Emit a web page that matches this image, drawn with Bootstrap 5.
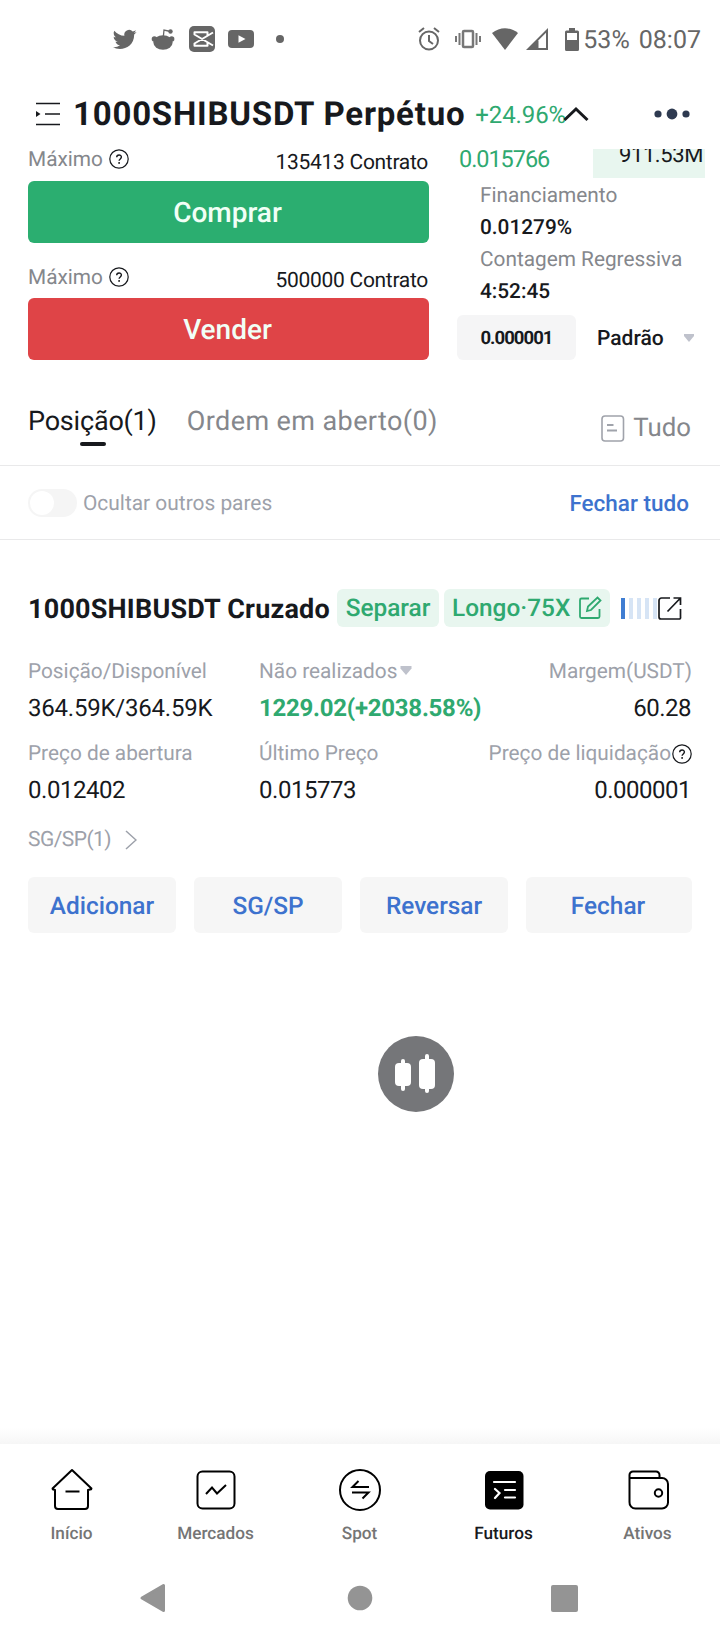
<!DOCTYPE html>
<html lang="pt">
<head>
<meta charset="utf-8">
<meta name="viewport" content="width=device-width, initial-scale=1">
<title>1000SHIBUSDT Perpétuo</title>
<link rel="stylesheet" href="https://cdn.jsdelivr.net/npm/bootstrap@5.3.0/dist/css/bootstrap.min.css">
<style>
*{text-rendering:geometricPrecision}
body{font-family:Roboto,"Liberation Sans",sans-serif;color:#17191d;background:#fff;font-size:21px;line-height:24px}
svg{display:block;flex:none}
.screen{width:720px;height:1640px;overflow:hidden}
.w5{font-weight:500}.w7{font-weight:700}
.up{color:#2fa970}.link{color:#3d72ce}.dim{color:#85878c}.soft{color:#9da1aa}
.line{white-space:nowrap}
.status{height:78px;color:#666;font-size:25px;padding:0 19px 0 112px}
.head{height:71px;padding:0 30px 0 36px}
.head h1{font-size:33px;line-height:40px;letter-spacing:.78px;font-weight:700;margin:0}
.chg{font-size:24px;letter-spacing:-.1px}
.trade{height:211px;padding:0 15px 0 28px}
.buy-col{width:401px}.info-col{width:248px;margin-left:28px}
.max-row{height:25px}
.max-row .dim{font-size:20.8px;margin-top:-4px}
.max-row .num{font-size:21px;letter-spacing:-.3px;margin-right:1px;padding-top:2px}
.big-btn{height:62px;border:0;border-radius:6px;color:#f1fff6;font-size:28px;font-weight:500;padding:2px 2px 0 0;width:100%}
.bg-buy{background:#2bae70}.bg-sell{background:#df4447}
.volume{width:112px;height:29px;background:#e8f6ef;overflow:hidden;font-size:22px;line-height:13px;padding-right:2px;text-align:right;letter-spacing:-.4px}
.stats{padding:2px 0 0 23px;font-size:20.8px;line-height:32px}
.step{width:119px;height:45px;border-radius:6px;background:#f5f5f6;font-size:18.5px;letter-spacing:-.95px}
.tabs-row{height:105px;padding:0 29px 0 28px;font-size:27px}
.tab-on{position:relative;letter-spacing:-.2px;margin-right:30px}
.tab-on::after{content:"";position:absolute;left:52px;bottom:-13px;width:26px;height:4px;border-radius:2px;background:#17191d}
.rule{height:1px;background:#e9e9ea}
.filter{height:73px;padding:0 31px 0 28px}
.toggle{width:49px;height:28px;border-radius:14px;background:#f5f5f5;padding:2px;margin-right:6px}
.toggle i{display:block;width:24px;height:24px;border-radius:50%;background:#fff}
.pos{padding:48px 28px 0}
.pos h2{font-size:27px;line-height:38px;font-weight:700;margin:0;padding-top:2px;width:309px;letter-spacing:.2px}
.tag{height:38px;border-radius:6px;background:#e8f6ef;font-size:24.4px;font-weight:500;color:#2fa970}
.strength{height:21px;gap:4px}
.strength i{width:4px;background:#d6e4f5}.strength i:first-child{background:#3f7dd2}
.facts{display:grid;grid-template-columns:231px 1fr auto;padding-top:26px}
.facts .lab{line-height:36px;color:#9da1aa;font-size:20.8px;height:36px}
.facts .val{line-height:36px;font-size:24px;letter-spacing:-.35px;height:46px}
.act{height:56px;border:0;border-radius:6px;background:#f6f6f6;color:#3d72ce;font-weight:500;font-size:24.4px;padding:1px 0 0}
.fab{width:76px;height:76px;margin-left:378px;margin-top:103px}
.dock-shadow{height:16px;background:linear-gradient(#fff,#f6f6f6)}
.dock{height:116px}
.dock a{width:144px;color:#757575;text-decoration:none;font-size:17.2px;font-weight:500;line-height:20px;padding:24px 1px 0 0}
.dock a.on{color:#17191d}
.dock svg{margin:0 0 12px 0}
.sys{height:80px;padding:0 142px 4px 139px}
</style>
</head>
<body>
<svg width="0" height="0" class="position-absolute"><defs>
<symbol id="q" viewBox="0 0 20 20"><circle cx="10" cy="10" r="9.2" fill="none" stroke="#17191d" stroke-width="1.2"/><path d="M7.700 8.200c0-2.900 4.700-2.900 4.700-.1 0 1.800-2.300 1.900-2.300 3.700" fill="none" stroke="#17191d" stroke-width="1.400"/><circle cx="10.100" cy="13.900" r=".9"/></symbol>
</defs></svg>
<main class="screen d-flex flex-column">
  <header class="status d-flex align-items-center">
    <svg width="25" height="25" viewBox="0 0 24 24" fill="#666"><path d="M23.600 4.900c-.8.4-1.700.6-2.700.8.9-.6 1.700-1.500 2-2.600-.9.5-1.900.9-3 1.100a4.700 4.700 0 0 0-8 4.300C8 8.300 4.500 6.400 2.200 3.600c-1.200 2.100-.6 4.900 1.500 6.300-.8 0-1.500-.2-2.100-.6 0 2.200 1.500 4.200 3.800 4.700-.7.2-1.400.2-2.100.1.6 1.900 2.300 3.200 4.400 3.300A9.600 9.600 0 0 1 .7 19.300c7 4.400 20.600 1.300 20.600-12 .9-.6 1.700-1.500 2.300-2.400z"/></svg>
    <svg style="margin-left:14px" width="25" height="25" viewBox="0 0 25 25" fill="#666"><ellipse cx="12" cy="15.500" rx="9.600" ry="7.300"/><circle cx="3.400" cy="12" r="2.700"/><circle cx="20.700" cy="12" r="2.700"/><circle cx="19.500" cy="4.500" r="2.200"/><path d="M12.300 10 13 3l6.500 1.500" fill="none" stroke="#666" stroke-width="1.300"/></svg>
    <svg style="margin-left:13px" width="26" height="26" viewBox="0 0 26 26"><rect width="26" height="26" rx="5" fill="#666"/><path d="M24 6.500 5.500 17.500v2.300h13v-3M24 19.500 5.500 8.500V6.200h13v3" fill="none" stroke="#fff" stroke-width="2" stroke-linejoin="round"/></svg>
    <svg style="margin-left:13px" width="26" height="20" viewBox="0 0 26 20"><rect y="1" width="26" height="18" rx="4" fill="#666"/><path d="m10.500 6.300 7 3.700-7 3.700z" fill="#fff"/></svg>
    <svg style="margin-left:22px" width="8" height="8" viewBox="0 0 8 8"><circle cx="4" cy="4" r="4" fill="#666"/></svg>
    <svg class="ms-auto" width="22" height="24" viewBox="0 0 22 24" fill="none" stroke="#666" stroke-width="2"><circle cx="11" cy="13.500" r="9"/><path d="M11 8v6l4 3M1 5l5-4M21 5l-5-4"/></svg>
    <svg style="margin-left:15px" width="26" height="20" viewBox="0 0 26 20" fill="none" stroke="#777" stroke-width="2"><rect x="8" y="2" width="10" height="16" rx="1" stroke-width="2.500"/><path d="M1 7v6M4.500 4v12M21.500 4v12M25 7v6"/></svg>
    <svg style="margin-left:11px" width="26" height="22" viewBox="0 0 26 22"><path d="M0 5C8-1.300 18-1.300 26 5L13 22z" fill="#666"/></svg>
    <svg style="margin-left:8px" width="22" height="22" viewBox="0 0 22 22"><path d="M0 22 22 0v22z" fill="#666"/><path d="M12.500 12.300V20H20V4.800z" fill="#fff"/></svg>
    <svg style="margin-left:17px" width="14" height="23" viewBox="0 0 14 23"><path d="M4 0h6v2.500h2.500A1.500 1.500 0 0 1 14 4v17.500a1.500 1.500 0 0 1-1.500 1.500h-11A1.500 1.500 0 0 1 0 21.500V4a1.500 1.500 0 0 1 1.500-1.500H4z" fill="#666"/><path d="M2 5h10v7H2z" fill="#fff"/></svg>
    <span class="line" style="margin:4px 0 0 4px">53%</span><span class="line" style="margin:4px 0 0 9px">08:07</span>
  </header>

  <section class="head d-flex align-items-center">
    <svg width="24" height="24" viewBox="0 0 24 24"><path d="M0 1.500h24M9 12h15M0 22.500h24" stroke="#17191d" stroke-width="1.300"/><path d="M0 9v6l4.500-3z" fill="#17191d"/></svg>
    <h1 class="line" style="margin:3px 0 0 13px">1000SHIBUSDT Perpétuo</h1>
    <span class="chg up line" style="margin:2px 0 0 10px">+24.96%</span>
    <svg style="margin-left:-3px" width="26" height="16" viewBox="0 0 26 16"><path d="M1.500 14 13 3l11.500 11" fill="none" stroke="#17191d" stroke-width="3"/></svg>
    <svg class="ms-auto" width="36" height="12" viewBox="0 0 36 12" fill="#2e3a50"><circle cx="4" cy="6" r="3.600"/><circle cx="18" cy="6" r="5.400"/><circle cx="32" cy="6" r="3.600"/></svg>
  </section>

  <section class="trade d-flex">
    <div class="buy-col">
      <div class="max-row d-flex align-items-center"><span class="dim line">Máximo</span><svg style="margin:-5px 0 0 6px" width="20" height="20"><use href="#q"/></svg><span class="num line ms-auto">135413 Contrato</span></div>
      <button class="big-btn bg-buy d-block" style="margin-top:7px">Comprar</button>
      <div class="max-row d-flex align-items-center" style="margin-top:24px"><span class="dim line">Máximo</span><svg style="margin:-6px 0 0 6px" width="20" height="20"><use href="#q"/></svg><span class="num line ms-auto">500000 Contrato</span></div>
      <button class="big-btn bg-sell d-block" style="margin-top:6px">Vender</button>
    </div>
    <div class="info-col">
      <div class="d-flex justify-content-between"><span class="up line" style="font-size:23.500px;letter-spacing:-1.050px;line-height:21px;padding-left:2px">0.015766</span><div class="volume line">911.53M</div></div>
      <div class="stats line"><div class="dim">Financiamento</div><div class="w5">0.01279%</div><div class="dim">Contagem Regressiva</div><div class="w5">4:52:45</div></div>
      <div class="d-flex align-items-center" style="margin-top:7px"><div class="step w7 d-flex align-items-center justify-content-center">0.000001</div><span class="w5 line" style="margin-left:21px;padding-top:2px">Padrão</span><svg class="ms-auto" style="margin-right:10px" width="12" height="8" viewBox="0 0 12 8"><path d="M1 0h10v2L6 8 1 2z" fill="#bfc2cc"/></svg></div>
    </div>
  </section>

  <nav class="tabs-row d-flex align-items-center">
    <span class="tab-on line" style="margin-top:17px;line-height:24px">Posição(1)</span><span class="dim line" style="letter-spacing:.4px;padding-top:17px">Ordem em aberto(0)</span>
    <svg class="ms-auto" style="margin-top:31px" width="24" height="27" viewBox="0 0 24 27" fill="none" stroke="#a0a3ab"><rect x="1" y="1" width="21.500" height="25" rx="3" stroke-width="1.600"/><path d="M6 10h6.500M6 15.500h10" stroke-width="1.800"/></svg>
    <span class="dim line" style="font-size:25.800px;margin:31px 0 0 8px">Tudo</span>
  </nav>
  <div class="rule"></div>
  <div class="filter d-flex align-items-center"><span class="toggle"><i></i></span><span class="soft line" style="font-size:20.900px;padding-top:2px">Ocultar outros pares</span><span class="link w5 line ms-auto" style="font-size:22.500px;padding-top:2px">Fechar tudo</span></div>
  <div class="rule"></div>

  <section class="pos">
    <div class="d-flex align-items-center">
      <h2 class="line">1000SHIBUSDT Cruzado</h2>
      <span class="tag line d-flex align-items-center justify-content-center" style="width:102px">Separar</span>
      <span class="tag line d-flex align-items-center" style="width:166px;margin-left:5px;padding-left:8px">Longo·75X<svg class="ms-auto" style="margin-right:7px" width="25" height="24" viewBox="0 0 25 24" fill="none" stroke="#2fa970" stroke-width="1.800"><path d="M11 2.500H3.500A1.500 1.500 0 0 0 2 4v16.500A1.500 1.500 0 0 0 3.500 22H20a1.500 1.500 0 0 0 1.500-1.500V13"/><path d="m9 15 1-4.500L19.500 1.500l3 3L13 14z"/></svg></span>
      <span class="strength d-flex" style="margin-left:11px"><i></i><i></i><i></i><i></i><i></i></span>
      <svg width="25" height="25" viewBox="0 0 25 25" fill="none" stroke="#17191d" stroke-width="1.700"><path d="M13 2H4.500A2.500 2.500 0 0 0 2 4.500V21a2 2 0 0 0 2 2h18a1.500 1.500 0 0 0 1.500-2v-8M10.500 15.500 23.500 2M16.500 2h7v7"/></svg>
    </div>
    <div class="facts line">
      <div class="lab">Posição/Disponível</div><div class="lab d-flex align-items-center">Não realizados<svg style="margin:-3px 0 0 3px" width="12" height="9" viewBox="0 0 12 9"><path d="M.500 0h11v2.500L6 9 .500 2.500z" fill="#bfc2cc"/></svg></div><div class="lab text-end">Margem(USDT)</div>
      <div class="val" style="letter-spacing:-.220px">364.59K/364.59K</div><div class="val up w7" style="letter-spacing:-.250px">1229.02(+2038.58%)</div><div class="val text-end" style="padding-right:1px;letter-spacing:-.500px">60.28</div>
      <div class="lab">Preço de abertura</div><div class="lab">Último Preço</div><div class="lab d-flex align-items-center">Preço de liquidação<svg style="margin-left:1px" width="20" height="20"><use href="#q"/></svg></div>
      <div class="val" style="letter-spacing:-.450px">0.012402</div><div class="val" style="letter-spacing:-.450px">0.015773</div><div class="val text-end" style="padding-right:1px;letter-spacing:-.500px">0.000001</div>
    </div>
    <div class="soft d-flex align-items-center" style="height:36px;margin-top:4px;letter-spacing:-.550px"><span>SG/SP(1)</span><svg style="margin-left:14px" width="12" height="20" viewBox="0 0 12 20"><path d="m1 1 10 9L1 19" fill="none" stroke="#9da1aa" stroke-width="1.500"/></svg></div>
    <div class="d-flex" style="margin-top:19px;gap:18px"><button class="act" style="width:148px">Adicionar</button><button class="act" style="width:148px">SG/SP</button><button class="act" style="width:148px">Reversar</button><button class="act flex-grow-1" style="padding-right:2px">Fechar</button></div>
  </section>
  <svg class="fab" viewBox="0 0 76 76"><circle cx="38" cy="38" r="38" fill="#757679"/><g fill="#fff"><rect x="17" y="27" width="16" height="23" rx="4"/><rect x="23" y="23" width="4" height="32" rx="2"/><rect x="41" y="23" width="16" height="30" rx="4"/><rect x="47" y="18" width="4" height="39" rx="2"/></g></svg>

  <div class="dock-shadow mt-auto"></div>
  <nav class="dock d-flex">
    <a class="d-flex flex-column align-items-center"><svg width="44" height="44" viewBox="0 0 44 44" fill="none" stroke="#000" stroke-width="2" stroke-linejoin="round"><path d="M2 21 22 2l20 19M2 21l3 1v16a3 3 0 0 0 3 3h27a3 3 0 0 0 3-3V22l4-1M15.500 23.500h14"/></svg>Início</a>
    <a class="d-flex flex-column align-items-center"><svg width="44" height="44" viewBox="0 0 44 44" fill="none" stroke="#000" stroke-width="2"><rect x="3.500" y="3.500" width="37" height="37" rx="5"/><path d="m12 26 6-6.500 5 6L32 17"/></svg>Mercados</a>
    <a class="d-flex flex-column align-items-center"><svg width="44" height="44" viewBox="0 0 44 44" fill="none" stroke="#000" stroke-width="2"><circle cx="22" cy="22" r="20"/><path d="M31 19H14.500l6-6M14 24.500h16.500l-6 6"/></svg>Spot</a>
    <a class="on d-flex flex-column align-items-center"><svg width="44" height="44" viewBox="0 0 44 44"><rect x="3" y="3" width="38.500" height="38.500" rx="5"/><path d="M12 14h21M23 22h10M23 29.500h10M13 21l4.500 4-4.500 5" fill="none" stroke="#fff" stroke-width="2.200" stroke-linecap="round"/></svg>Futuros</a>
    <a class="d-flex flex-column align-items-center"><svg width="44" height="44" viewBox="0 0 44 44" fill="none" stroke="#000" stroke-width="2"><path d="M3.500 9.500V34a6 6 0 0 0 6 6.500H36a6 6 0 0 0 6-6V16a6 6 0 0 0-6-6H3.500V7A3.500 3.500 0 0 1 7 3.500h23A3.500 3.500 0 0 1 33.500 7v3"/><circle cx="32.500" cy="25" r="3.700"/></svg>Ativos</a>
  </nav>
  <footer class="sys d-flex align-items-center">
    <svg width="26" height="30" viewBox="0 0 26 30"><path d="M3 15 24.500 2.500v25z" fill="#949494" stroke="#949494" stroke-width="3" stroke-linejoin="round"/></svg>
    <svg style="margin-left:182px" width="26" height="26" viewBox="0 0 26 26"><circle cx="13" cy="13" r="12.300" fill="#949494"/></svg>
    <svg class="ms-auto" width="27" height="27" viewBox="0 0 27 27"><rect width="27" height="27" rx="2" fill="#949494"/></svg>
  </footer>
</main>
<script src="https://cdn.jsdelivr.net/npm/bootstrap@5.3.0/dist/js/bootstrap.bundle.min.js"></script>
</body>
</html>
